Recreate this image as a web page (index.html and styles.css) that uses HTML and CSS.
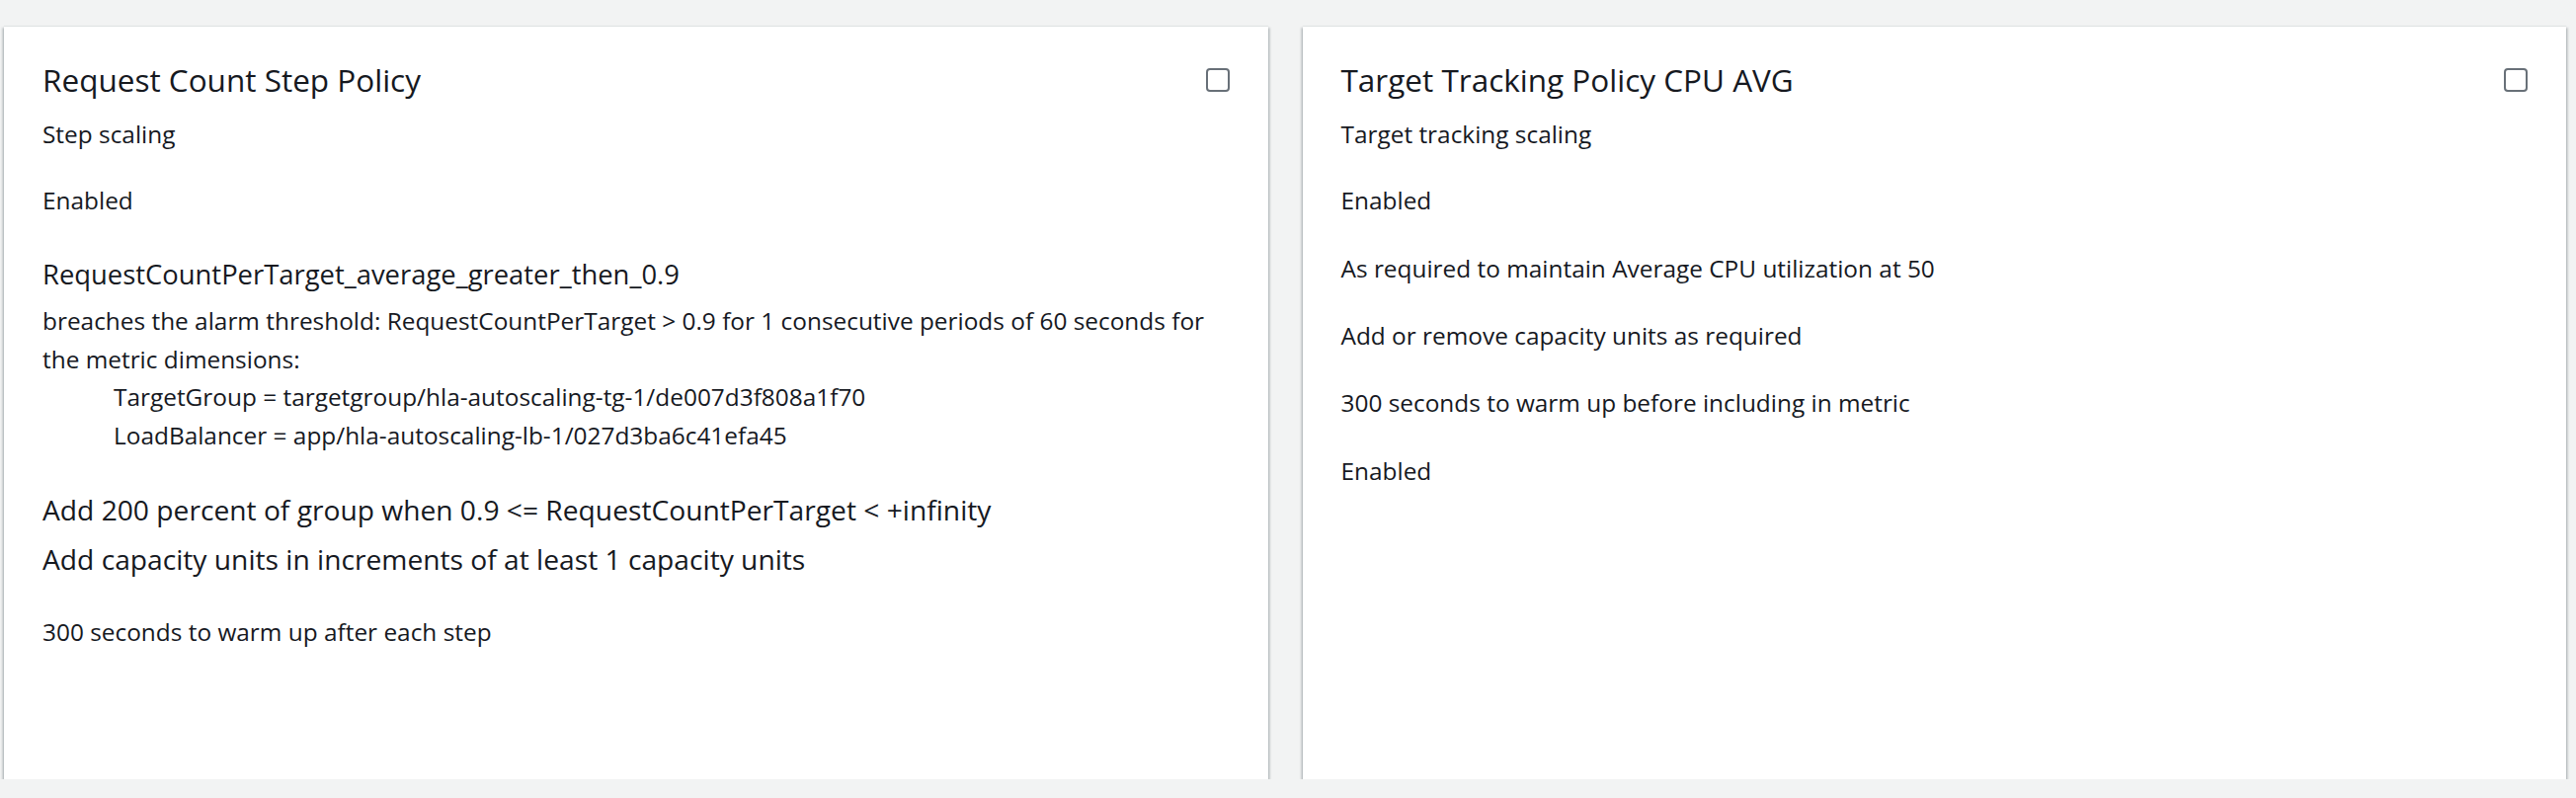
FILE: index.html
```html
<!DOCTYPE html>
<html lang="en">
<head>
<meta charset="utf-8">
<title>Scaling policies</title>
<link rel="stylesheet" href="styles.css">
</head>
<body>
<div class="policies">
  <section class="card">
    <header class="card-header">
      <h2 class="card-title">Request Count Step Policy</h2>
      <span class="checkbox" role="checkbox" aria-checked="false"></span>
    </header>
    <div class="field field-type">Step scaling</div>
    <div class="field field-status">Enabled</div>
    <div class="alarm">
      <div class="alarm-name">RequestCountPerTarget_average_greater_then_0.9</div>
      <div class="alarm-desc">breaches the alarm threshold: RequestCountPerTarget &gt; 0.9 for 1 consecutive periods of 60 seconds for the metric dimensions:</div>
      <div class="dimension">TargetGroup = targetgroup/hla-autoscaling-tg-1/de007d3f808a1f70</div>
      <div class="dimension">LoadBalancer = app/hla-autoscaling-lb-1/027d3ba6c41efa45</div>
    </div>
    <div class="steps">
      <div class="step">Add 200 percent of group when 0.9 &lt;= RequestCountPerTarget &lt; +infinity</div>
      <div class="step">Add capacity units in increments of at least 1 capacity units</div>
    </div>
    <div class="field field-warmup">300 seconds to warm up after each step</div>
  </section>
  <section class="card">
    <header class="card-header">
      <h2 class="card-title">Target Tracking Policy CPU AVG</h2>
      <span class="checkbox" role="checkbox" aria-checked="false"></span>
    </header>
    <div class="field field-type">Target tracking scaling</div>
    <div class="field field-status">Enabled</div>
    <div class="field field-spaced field-first">As required to maintain Average CPU utilization at 50</div>
    <div class="field field-spaced">Add or remove capacity units as required</div>
    <div class="field field-spaced">300 seconds to warm up before including in metric</div>
    <div class="field field-spaced">Enabled</div>
  </section>
</div>
</body>
</html>
```

FILE: styles.css
```css
html, body {
  margin: 0;
  padding: 0;
  background: #f2f3f3;
}

body {
  font-family: "Open Sans", "Noto Sans", sans-serif;
  color: #16191f;
  font-size: 24.4px;
  line-height: 38.5px;
}

.policies {
  display: grid;
  grid-template-columns: 1fr 1fr;
  column-gap: 35px;
  padding: 27px 10px 0 4px;
}

.card {
  background: #ffffff;
  height: 762px;
  box-sizing: border-box;
  padding: 35px 39px 0 39px;
  box-shadow: 0 2px 2px 0 rgba(0, 28, 36, 0.3),
              2px 1px 2px 0 rgba(0, 28, 36, 0.15),
              -2px 1px 2px 0 rgba(0, 28, 36, 0.15),
              0 -1px 1px 0 rgba(0, 28, 36, 0.06);
}

.card-header {
  display: flex;
  justify-content: space-between;
  align-items: center;
}

.card-title {
  margin: 0;
  font-size: 31.5px;
  font-weight: 400;
  line-height: 38.5px;
}

.checkbox {
  width: 24px;
  height: 24px;
  box-sizing: border-box;
  border: 2px solid #687078;
  border-radius: 4px;
  background: #ffffff;
}

.field-type {
  margin-top: 16px;
}

.field-status {
  margin-top: 28.5px;
}

.field-spaced {
  margin-top: 29.7px;
}

.field-spaced.field-first {
  margin-top: 31px;
}

.alarm {
  margin-top: 36.5px;
}

.alarm-name {
  font-size: 27.4px;
}

.alarm-desc {
  margin-top: 9px;
}

.dimension {
  padding-left: 72px;
}

.steps {
  margin-top: 37px;
  display: flex;
  flex-direction: column;
  gap: 11.5px;
}

.step {
  font-size: 28.2px;
}

.field-warmup {
  margin-top: 35px;
}
```
